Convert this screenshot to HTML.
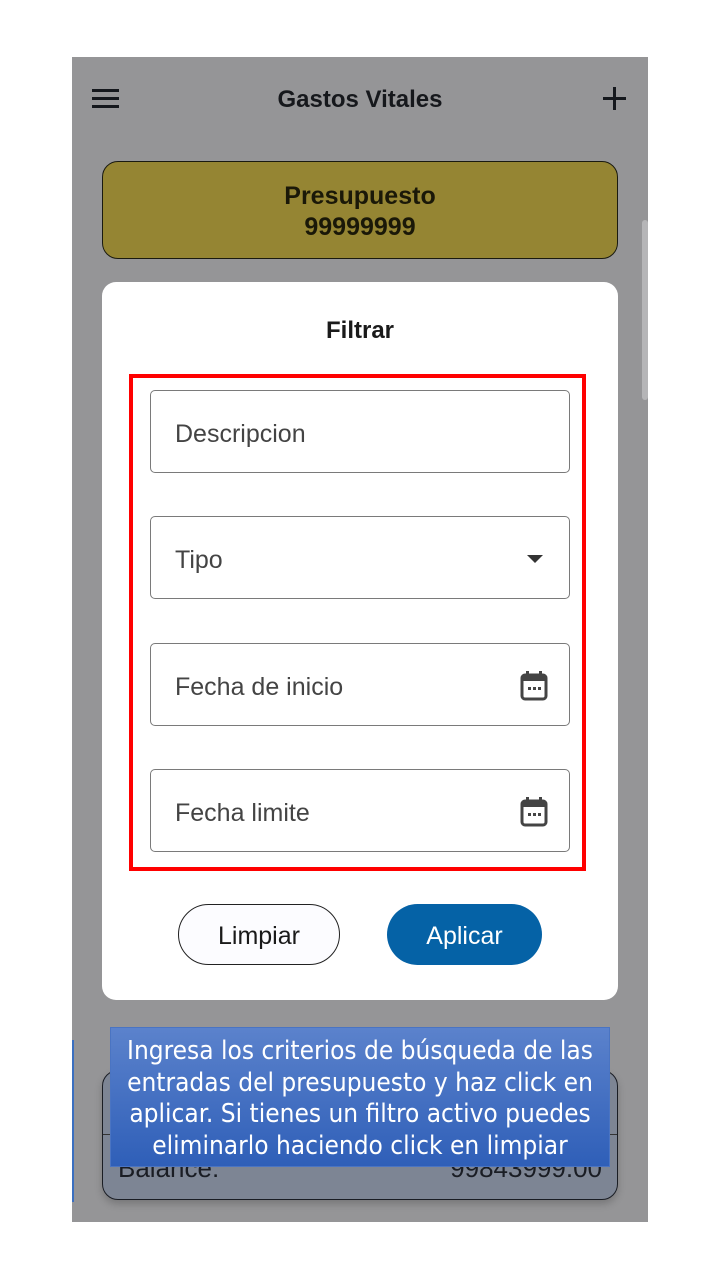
<!DOCTYPE html>
<html><head><meta charset="utf-8"><style>
*{margin:0;padding:0;box-sizing:border-box}
body{width:720px;height:1280px;background:#fff;position:relative;overflow:hidden;font-family:"Liberation Sans",sans-serif}
.ph{position:absolute;left:72px;top:57px;width:576px;height:1165px;background:#959597}
.a{position:absolute}
.field{position:absolute;left:150px;width:420px;height:83px;border:1.5px solid #7a7a7a;border-radius:5px;background:#fff;font-size:25px;color:#444;padding-left:24px;line-height:86px}
</style></head><body>
<div class="ph"></div>
<div class="a" style="left:92px;top:89px;width:27px;height:3px;background:#15181d;box-shadow:0 8px 0 #15181d,0 16px 0 #15181d"></div>
<div class="a" style="left:0;width:720px;top:86px;text-align:center;font-size:24px;font-weight:bold;color:#16181c">Gastos Vitales</div>
<div class="a" style="left:603px;top:97px;width:23px;height:3px;background:#15181d"></div>
<div class="a" style="left:613px;top:87px;width:3px;height:23px;background:#15181d"></div>
<div class="a" style="left:102px;top:161px;width:516px;height:98px;background:#958533;border:1.5px solid #1a1a10;border-radius:16px;text-align:center;font-size:25px;font-weight:bold;color:#1a1808;line-height:31px;padding-top:19px">Presupuesto<br>99999999</div>
<div class="a" style="left:642px;top:220px;width:6px;height:180px;background:#b5b5b7;border-radius:3px"></div>
<div class="a" style="left:102px;top:1070px;width:516px;height:130px;background:#7d8594;border:1.5px solid #1a1d24;border-radius:16px;box-shadow:0 4px 8px rgba(0,0,0,.2)"></div>
<div class="a" style="left:103px;top:1134px;width:514px;height:1px;background:#333"></div>
<div class="a" style="left:118px;top:1153px;font-size:26px;color:#1a1d24">Balance:</div>
<div class="a" style="right:118px;top:1153px;font-size:26px;color:#1a1d24">99843999.00</div>
<div class="a" style="left:102px;top:282px;width:516px;height:718px;background:#fff;border-radius:14px"></div>
<div class="a" style="left:0;width:720px;top:317px;text-align:center;font-size:24px;font-weight:bold;color:#1a1a1a">Filtrar</div>
<div class="a" style="left:129px;top:374px;width:457px;height:497px;border:4px solid #f00"></div>
<div class="field" style="top:390px">Descripcion</div>
<div class="field" style="top:516px">Tipo<div class="a" style="right:26px;top:38px;border-left:8px solid transparent;border-right:8px solid transparent;border-top:8px solid #333"></div></div>
<div class="field" style="top:643px">Fecha de inicio<svg class="a" style="right:20px;top:26px" width="30" height="32" viewBox="0 0 30 32"><rect x="3" y="5" width="24" height="24" rx="3" fill="none" stroke="#444" stroke-width="3"/><rect x="3" y="5" width="24" height="6" fill="#444"/><rect x="7" y="1" width="3" height="6" fill="#444"/><rect x="20" y="1" width="3" height="6" fill="#444"/><rect x="9" y="17" width="3" height="3" fill="#444"/><rect x="14" y="17" width="3" height="3" fill="#444"/><rect x="19" y="17" width="3" height="3" fill="#444"/></svg></div>
<div class="field" style="top:769px">Fecha limite<svg class="a" style="right:20px;top:26px" width="30" height="32" viewBox="0 0 30 32"><rect x="3" y="5" width="24" height="24" rx="3" fill="none" stroke="#444" stroke-width="3"/><rect x="3" y="5" width="24" height="6" fill="#444"/><rect x="7" y="1" width="3" height="6" fill="#444"/><rect x="20" y="1" width="3" height="6" fill="#444"/><rect x="9" y="17" width="3" height="3" fill="#444"/><rect x="14" y="17" width="3" height="3" fill="#444"/><rect x="19" y="17" width="3" height="3" fill="#444"/></svg></div>
<div class="a" style="left:178px;top:904px;width:162px;height:61px;border:1.5px solid #222;border-radius:31px;background:#fcfcff;text-align:center;line-height:62px;font-size:25px;color:#1a1a1a">Limpiar</div>
<div class="a" style="left:387px;top:904px;width:155px;height:61px;border-radius:31px;background:#0562a6;text-align:center;line-height:64px;font-size:25px;color:#fff">Aplicar</div>
<div class="a" style="left:72px;top:1040px;width:2px;height:162px;background:#3a6fc0"></div>
<div class="a" style="left:110px;top:1027px;width:500px;height:140px;background:linear-gradient(#5b82cc,#2f5fb8);border:1px solid #4a74c2;color:#fff;font-size:26px;line-height:31.5px;text-align:center;padding-top:8px;font-family:'DejaVu Sans Condensed','Liberation Sans Narrow',sans-serif;white-space:nowrap">Ingresa los criterios de búsqueda de las<br>entradas del presupuesto y haz click en<br>aplicar. Si tienes un filtro activo puedes<br>eliminarlo haciendo click en limpiar</div>
</body></html>
